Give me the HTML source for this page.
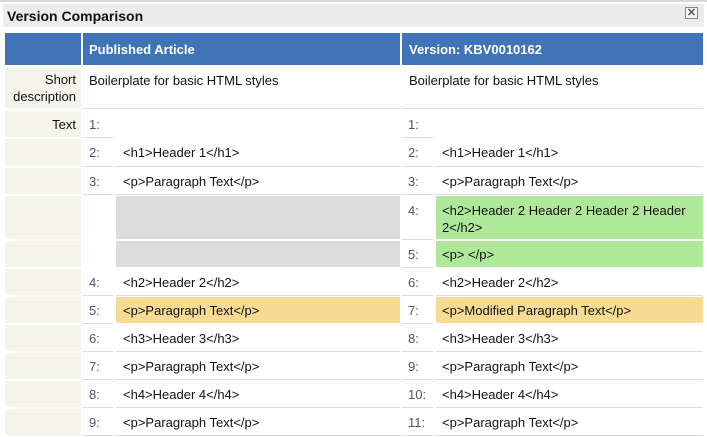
<!DOCTYPE html>
<html><head><meta charset="utf-8"><style>
*{margin:0;padding:0;box-sizing:border-box}
body{width:707px;height:437px;background:#fff;position:relative;overflow:hidden;font-family:"Liberation Sans",Arial,sans-serif;font-size:13px;color:#111}
.a{position:absolute}
.lab{background:#f5f4ea;text-align:right;padding-right:5px;left:5px;width:76px}
.n{color:#555;border-bottom:1px solid #dcdcdc;padding-left:6px}
.nl{left:83px;width:30px}
.nr{left:402px;width:31px}
.c{border-bottom:1px solid #dcdcdc;padding-left:7px}
.cl{left:116px;width:284px}
.cr{left:436px;width:267px;padding-left:6px}
.g{background:#dcdcdc;border:none}
.gr{background:#b0e89b;border:none}
.y{background:#f7db94;border:none}
.t{line-height:28px}
</style></head><body>
<div class="a" style="left:0;top:0;width:707px;height:2px;background:#d8d8d8"></div>
<div class="a" style="left:3px;top:4px;width:701px;height:23px;background:#ececec"></div>
<div class="a" style="left:7px;top:7px;font-weight:bold;font-size:14px;line-height:18px">Version Comparison</div>
<div class="a" style="left:685px;top:7px;width:13px;height:12px;border:1px solid #888;background:#f4f4f4;font-size:11px;line-height:10px;text-align:center;color:#555;font-weight:bold">✕</div>

<div class="a" style="left:5px;top:33px;width:76px;height:32px;background:#3f74b6"></div>
<div class="a" style="left:83px;top:33px;width:317px;height:32px;background:#3f74b6;color:#fff;font-weight:bold;padding-left:6px;line-height:33px">Published Article</div>
<div class="a" style="left:402px;top:33px;width:301px;height:32px;background:#3f74b6;color:#fff;font-weight:bold;padding-left:7px;line-height:33px">Version: KBV0010162</div>

<div class="a lab" style="top:67px;height:41px;line-height:17px;padding-top:4px">Short<br>description</div>
<div class="a c" style="left:83px;width:317px;top:67px;height:42px;padding-left:6px;line-height:28px">Boilerplate for basic HTML styles</div>
<div class="a c" style="left:402px;width:301px;top:67px;height:42px;padding-left:7px;line-height:28px">Boilerplate for basic HTML styles</div>

<div class="a lab t" style="top:111px;height:26px">Text</div>
<div class="a lab" style="top:139px;height:27px"></div>
<div class="a lab" style="top:168px;height:26px"></div>
<div class="a lab" style="top:196px;height:43px"></div>
<div class="a lab" style="top:241px;height:26px"></div>
<div class="a lab" style="top:269px;height:26px"></div>
<div class="a lab" style="top:297px;height:26px"></div>
<div class="a lab" style="top:325px;height:26px"></div>
<div class="a lab" style="top:353px;height:26px"></div>
<div class="a lab" style="top:381px;height:26px"></div>
<div class="a lab" style="top:409px;height:26px"></div>

<div class="a n nl t" style="top:111px;height:27px">1:</div>
<div class="a n nr t" style="top:111px;height:27px">1:</div>

<div class="a n nl t" style="top:139px;height:28px">2:</div>
<div class="a c cl t" style="top:139px;height:28px">&lt;h1&gt;Header 1&lt;/h1&gt;</div>
<div class="a n nr t" style="top:139px;height:28px">2:</div>
<div class="a c cr t" style="top:139px;height:28px">&lt;h1&gt;Header 1&lt;/h1&gt;</div>

<div class="a n nl t" style="top:168px;height:27px">3:</div>
<div class="a c cl t" style="top:168px;height:27px">&lt;p&gt;Paragraph Text&lt;/p&gt;</div>
<div class="a n nr t" style="top:168px;height:27px">3:</div>
<div class="a c cr t" style="top:168px;height:27px">&lt;p&gt;Paragraph Text&lt;/p&gt;</div>

<div class="a c cl g" style="top:196px;height:43px"></div>
<div class="a n nr" style="top:196px;height:44px;line-height:17px;padding-top:6px">4:</div>
<div class="a c cr gr" style="top:196px;height:43px;line-height:17px;padding-top:6px">&lt;h2&gt;Header 2 Header 2 Header 2 Header<br>2&lt;/h2&gt;</div>

<div class="a c cl g" style="top:241px;height:26px"></div>
<div class="a n nr t" style="top:241px;height:27px">5:</div>
<div class="a c cr gr t" style="top:241px;height:26px">&lt;p&gt; &lt;/p&gt;</div>

<div class="a n nl t" style="top:269px;height:27px">4:</div>
<div class="a c cl t" style="top:269px;height:27px">&lt;h2&gt;Header 2&lt;/h2&gt;</div>
<div class="a n nr t" style="top:269px;height:27px">6:</div>
<div class="a c cr t" style="top:269px;height:27px">&lt;h2&gt;Header 2&lt;/h2&gt;</div>

<div class="a n nl t" style="top:297px;height:27px">5:</div>
<div class="a c cl y t" style="top:297px;height:26px">&lt;p&gt;Paragraph Text&lt;/p&gt;</div>
<div class="a n nr t" style="top:297px;height:27px">7:</div>
<div class="a c cr y t" style="top:297px;height:26px">&lt;p&gt;Modified Paragraph Text&lt;/p&gt;</div>

<div class="a n nl t" style="top:325px;height:27px">6:</div>
<div class="a c cl t" style="top:325px;height:27px">&lt;h3&gt;Header 3&lt;/h3&gt;</div>
<div class="a n nr t" style="top:325px;height:27px">8:</div>
<div class="a c cr t" style="top:325px;height:27px">&lt;h3&gt;Header 3&lt;/h3&gt;</div>

<div class="a n nl t" style="top:353px;height:27px">7:</div>
<div class="a c cl t" style="top:353px;height:27px">&lt;p&gt;Paragraph Text&lt;/p&gt;</div>
<div class="a n nr t" style="top:353px;height:27px">9:</div>
<div class="a c cr t" style="top:353px;height:27px">&lt;p&gt;Paragraph Text&lt;/p&gt;</div>

<div class="a n nl t" style="top:381px;height:27px">8:</div>
<div class="a c cl t" style="top:381px;height:27px">&lt;h4&gt;Header 4&lt;/h4&gt;</div>
<div class="a n nr t" style="top:381px;height:27px">10:</div>
<div class="a c cr t" style="top:381px;height:27px">&lt;h4&gt;Header 4&lt;/h4&gt;</div>

<div class="a n nl t" style="top:409px;height:27px">9:</div>
<div class="a c cl t" style="top:409px;height:27px">&lt;p&gt;Paragraph Text&lt;/p&gt;</div>
<div class="a n nr t" style="top:409px;height:27px">11:</div>
<div class="a c cr t" style="top:409px;height:27px">&lt;p&gt;Paragraph Text&lt;/p&gt;</div>
</body></html>
